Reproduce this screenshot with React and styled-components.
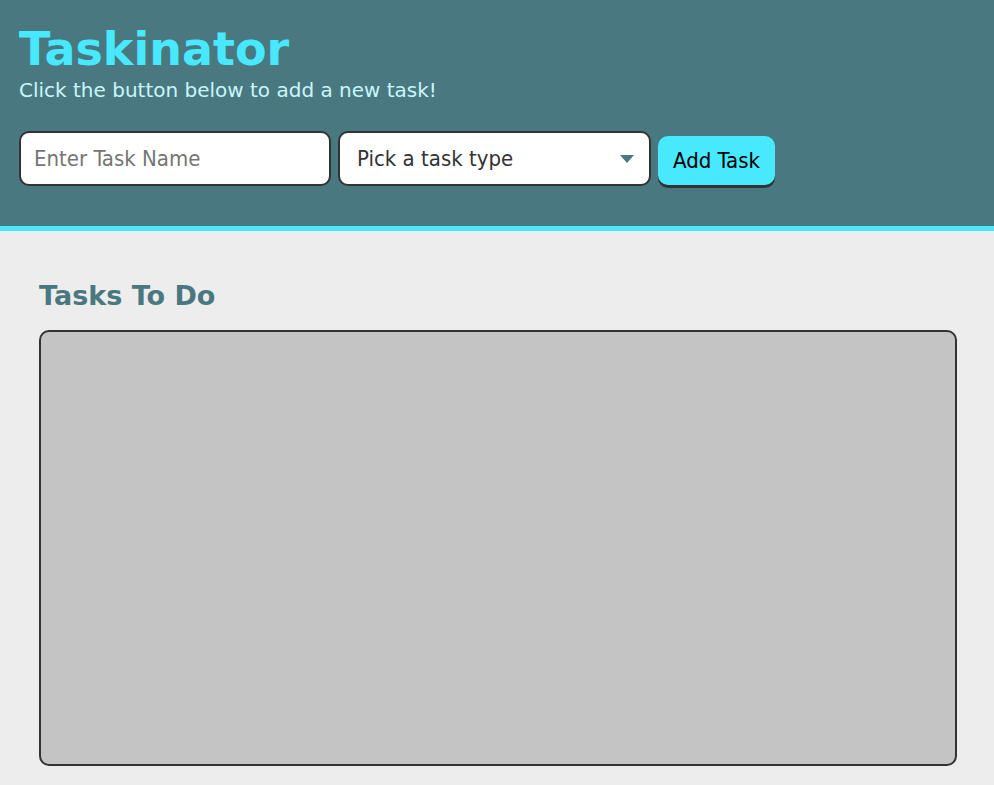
import styled, { createGlobalStyle } from "styled-components";

const GlobalStyle = createGlobalStyle`
  body {
    margin: 0;
    background: #ededed;
    font-family: "DejaVu Sans", Verdana, sans-serif;
  }
`;

const Header = styled.header`
  box-sizing: border-box;
  height: 231px;
  background: #4a7880;
  border-bottom: 5px solid #48e8ff;
  padding: 22px 19px 0;
`;

const Title = styled.h1`
  margin: 0;
  color: #48e8ff;
  font-size: 46px;
  line-height: 54px;
  font-weight: bold;
`;

const Subtitle = styled.p`
  margin: 0;
  color: #c8f6fb;
  font-size: 20px;
  line-height: 28px;
`;

const Form = styled.form`
  display: flex;
  align-items: flex-start;
  gap: 7px;
  margin-top: 27px;
`;

const Field = styled.div`
  box-sizing: border-box;
  width: ${(p) => p.$width}px;
  height: 55px;
  background: #fff;
  border: 2px solid #333;
  border-radius: 10px;
  display: flex;
  align-items: center;
  justify-content: space-between;
  padding: 0 15px 0 ${(p) => p.$padLeft}px;
  font-family: "DejaVu Sans Condensed", "DejaVu Sans", sans-serif;
  font-size: 22px;
  color: ${(p) => p.$color};
`;

const Caret = styled.span`
  width: 0;
  height: 0;
  border-left: 7px solid transparent;
  border-right: 7px solid transparent;
  border-top: 8px solid #4a7880;
`;

const AddButton = styled.button`
  margin-top: 5px;
  width: 117px;
  height: 49px;
  padding: 0;
  background: #48e8ff;
  border: none;
  border-radius: 10px;
  box-shadow: 0 3px 0 #333;
  font-family: "DejaVu Sans Condensed", "DejaVu Sans", sans-serif;
  font-size: 22px;
  color: #000;
`;

const Main = styled.main`
  padding: 48px 37px 0 39px;
`;

const SectionTitle = styled.h2`
  margin: 0 0 17px;
  color: #4a7880;
  font-size: 27px;
  line-height: 34px;
  font-weight: bold;
`;

const TaskList = styled.ul`
  margin: 0;
  padding: 0;
  height: 436px;
  box-sizing: border-box;
  background: #c4c4c4;
  border: 2px solid #333;
  border-radius: 10px;
`;

export default function App() {
  return (
    <>
      <GlobalStyle />
      <Header>
        <Title>Taskinator</Title>
        <Subtitle>Click the button below to add a new task!</Subtitle>
        <Form>
          <Field $width={312} $padLeft={13} $color="#757575">Enter Task Name</Field>
          <Field $width={313} $padLeft={17} $color="#333">
            Pick a task type
            <Caret />
          </Field>
          <AddButton type="button">Add Task</AddButton>
        </Form>
      </Header>
      <Main>
        <SectionTitle>Tasks To Do</SectionTitle>
        <TaskList />
      </Main>
    </>
  );
}
